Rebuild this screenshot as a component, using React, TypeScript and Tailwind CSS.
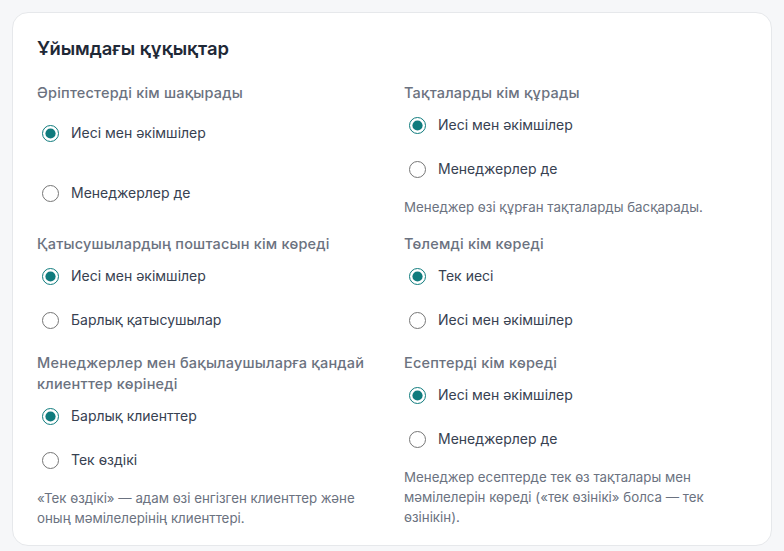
import React from "react";

type Opt = { label: string; checked?: boolean };

function Radio({ name, opt, grow }: { name: string; opt: Opt; grow?: boolean }) {
  return (
    <label className={`flex items-center gap-[12px] ${grow ? "flex-1" : "h-[44px]"}`}>
      <input
        type="radio"
        name={name}
        defaultChecked={opt.checked}
        className="ml-[5px] m-0 w-[17px] h-[17px] accent-[#0f7b7d] shrink-0"
      />
      <span className="text-[14px] leading-5 text-[#374151]">{opt.label}</span>
    </label>
  );
}

function Section({
  title,
  name,
  opts,
  hint,
  grow,
  hintPad,
}: {
  title: string;
  name: string;
  opts: Opt[];
  hint?: string;
  grow?: boolean;
  hintPad?: boolean;
}) {
  return (
    <div className="flex flex-col">
      <div className="text-[14.5px] leading-[21px] font-medium text-[#6b7280] tracking-[0.2px]">{title}</div>
      <div className={`flex flex-col ${grow ? "flex-1" : ""}`}>
        {opts.map((o) => (
          <Radio key={o.label} name={name} opt={o} grow={grow} />
        ))}
      </div>
      {hint && (
        <div className={`mt-1.5 text-[13.3px] leading-5 text-[#6b7280] ${hintPad ? "pb-1.5" : ""}`}>{hint}</div>
      )}
    </div>
  );
}

export default function App() {
  return (
    <div className="min-h-[551px] bg-[#f6f7f9] p-3" style={{ fontFamily: "Inter, 'Noto Sans', sans-serif" }}>
      <div className="bg-white border border-[#e6e8eb] rounded-2xl px-6 pt-[21px] pb-[17px]">
        <h2 className="text-[18.4px] leading-7 font-semibold text-[#1f2937] mb-5">Ұйымдағы құқықтар</h2>
        <div className="grid grid-cols-2 gap-x-6 gap-y-[10px]">
          <Section
            title="Әріптестерді кім шақырады"
            name="invite"
            grow
            opts={[{ label: "Иесі мен әкімшілер", checked: true }, { label: "Менеджерлер де" }]}
          />
          <Section
            title="Тақталарды кім құрады"
            name="boards"
            opts={[{ label: "Иесі мен әкімшілер", checked: true }, { label: "Менеджерлер де" }]}
            hint="Менеджер өзі құрған тақталарды басқарады."
            hintPad
          />
          <Section
            title="Қатысушылардың поштасын кім көреді"
            name="email"
            opts={[{ label: "Иесі мен әкімшілер", checked: true }, { label: "Барлық қатысушылар" }]}
          />
          <Section
            title="Төлемді кім көреді"
            name="pay"
            opts={[{ label: "Тек иесі", checked: true }, { label: "Иесі мен әкімшілер" }]}
          />
          <Section
            title="Менеджерлер мен бақылаушыларға қандай клиенттер көрінеді"
            name="clients"
            opts={[{ label: "Барлық клиенттер", checked: true }, { label: "Тек өздікі" }]}
            hint="«Тек өздікі» — адам өзі енгізген клиенттер және оның мәмілелерінің клиенттері."
          />
          <Section
            title="Есептерді кім көреді"
            name="reports"
            opts={[{ label: "Иесі мен әкімшілер", checked: true }, { label: "Менеджерлер де" }]}
            hint="Менеджер есептерде тек өз тақталары мен мәмілелерін көреді («тек өзінікі» болса — тек өзінікін)."
          />
        </div>
      </div>
    </div>
  );
}
